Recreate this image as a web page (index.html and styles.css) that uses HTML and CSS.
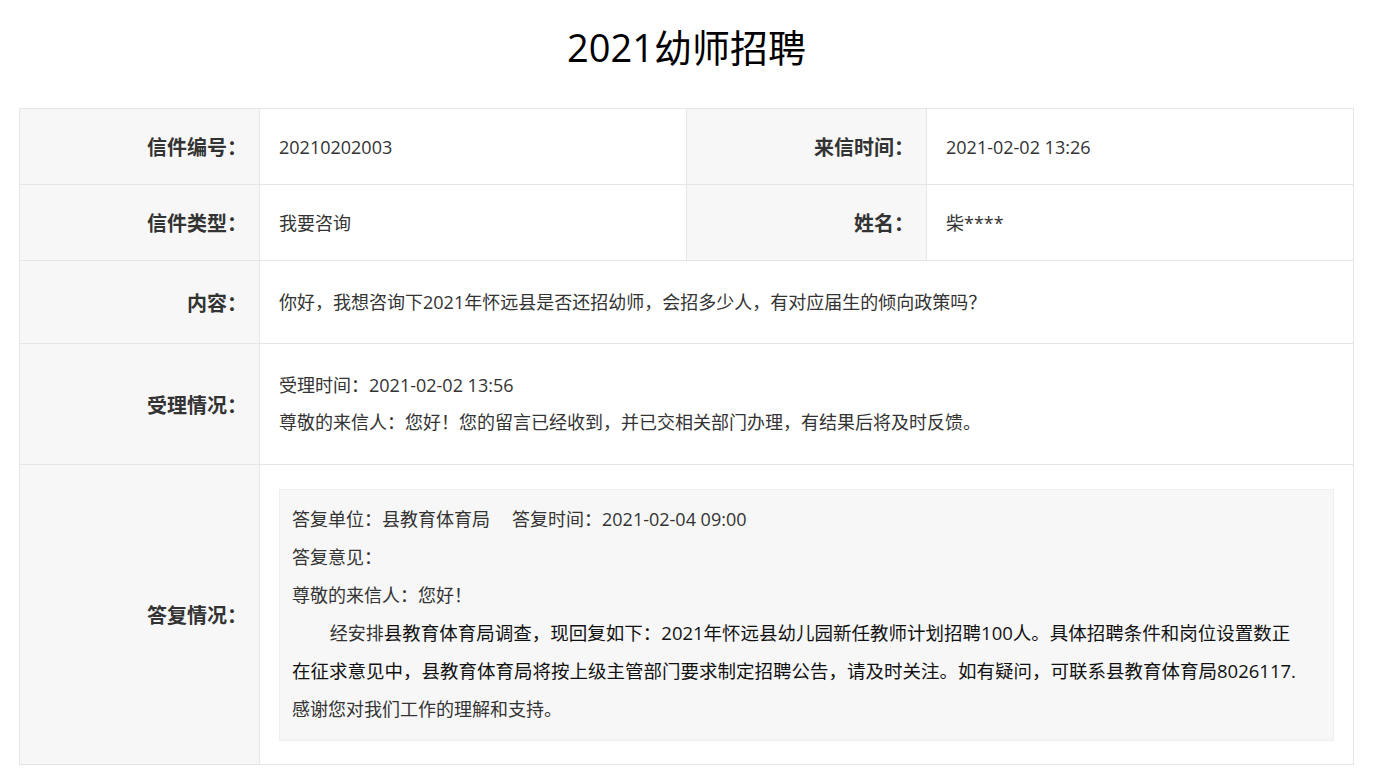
FILE: index.html
```html
<!DOCTYPE html>
<html lang="zh-CN">
<head>
<meta charset="utf-8">
<title>2021幼师招聘</title>
<link rel="stylesheet" href="styles.css">
</head>
<body>
<div class="page">
  <h1 class="title">2021幼师招聘</h1>
  <table class="letter">
    <colgroup>
      <col class="c-label"><col class="c-value"><col class="c-label"><col class="c-value">
    </colgroup>
    <tr class="r-std">
      <th>信件编号：</th>
      <td>20210202003</td>
      <th>来信时间：</th>
      <td>2021-02-02 13:26</td>
    </tr>
    <tr class="r-std">
      <th>信件类型：</th>
      <td>我要咨询</td>
      <th>姓名：</th>
      <td>柴****</td>
    </tr>
    <tr class="r-content">
      <th>内容：</th>
      <td colspan="3">你好，我想咨询下2021年怀远县是否还招幼师，会招多少人，有对应届生的倾向政策吗？</td>
    </tr>
    <tr class="r-accept">
      <th>受理情况：</th>
      <td colspan="3">
        <div class="lines">
          <div>受理时间：2021-02-02 13:56</div>
          <div>尊敬的来信人：您好！您的留言已经收到，并已交相关部门办理，有结果后将及时反馈。</div>
        </div>
      </td>
    </tr>
    <tr class="r-reply">
      <th>答复情况：</th>
      <td colspan="3">
        <div class="reply">
          <div>答复单位：县教育体育局<span class="gap"></span>答复时间：2021-02-04 09:00</div>
          <div>答复意见：</div>
          <div>尊敬的来信人：您好！</div>
          <p class="body-text">经安排<span class="dark">县教育体育局调查，现回复如下：2021年怀远县幼儿园新任教师计划招聘100人。具体招聘条件和岗位设置数正在征求意见中，县教育体育局将按上级主管部门要求制定招聘公告，请及时关注。如有疑问，可联系县教育体育局8026117.</span></p>
          <div>感谢您对我们工作的理解和支持。</div>
        </div>
      </td>
    </tr>
  </table>
</div>
</body>
</html>
```

FILE: styles.css
```css
html, body {
  margin: 0;
  padding: 0;
  background: #fff;
}

body {
  font-family: "Open Sans", "Noto Sans CJK SC", sans-serif;
  color: #333;
}

.page {
  padding: 0 23px 0 19px;
}

.title {
  margin: 0;
  height: 108px;
  box-sizing: border-box;
  padding-top: 21px;
  font-size: 38px;
  line-height: 52px;
  font-weight: 400;
  color: #000;
  text-align: center;
}

.letter {
  width: 1335px;
  border-collapse: collapse;
  table-layout: fixed;
  font-size: 18px;
}

.c-label { width: 240px; }
.c-value { width: 427px; }

.letter th,
.letter td {
  border: 1px solid #e6e6e6;
  vertical-align: middle;
}

.letter th {
  background: #f7f7f7;
  text-align: right;
  font-family: "Noto Sans CJK SC", sans-serif;
  font-size: 20px;
  font-weight: 700;
  color: #333;
  padding: 0 12px 0 0;
}

.letter td {
  padding: 0 19px;
  line-height: 30px;
  color: #333;
}

.r-std { height: 76px; }
.r-content { height: 83px; }
.r-accept { height: 121px; }

.lines {
  line-height: 37px;
}

.r-reply td {
  padding: 24px 19px 23px 19px;
}

.reply {
  background: #f7f7f7;
  border: 1px solid #eeeeee;
  padding: 10px 30px 12px 12px;
  line-height: 38px;
  color: #333;
}

.gap {
  display: inline-block;
  width: 22px;
}

.body-text {
  margin: 0;
  text-indent: 2.1em;
}

.dark {
  color: #111;
  font-size: 18.5px;
}
```
